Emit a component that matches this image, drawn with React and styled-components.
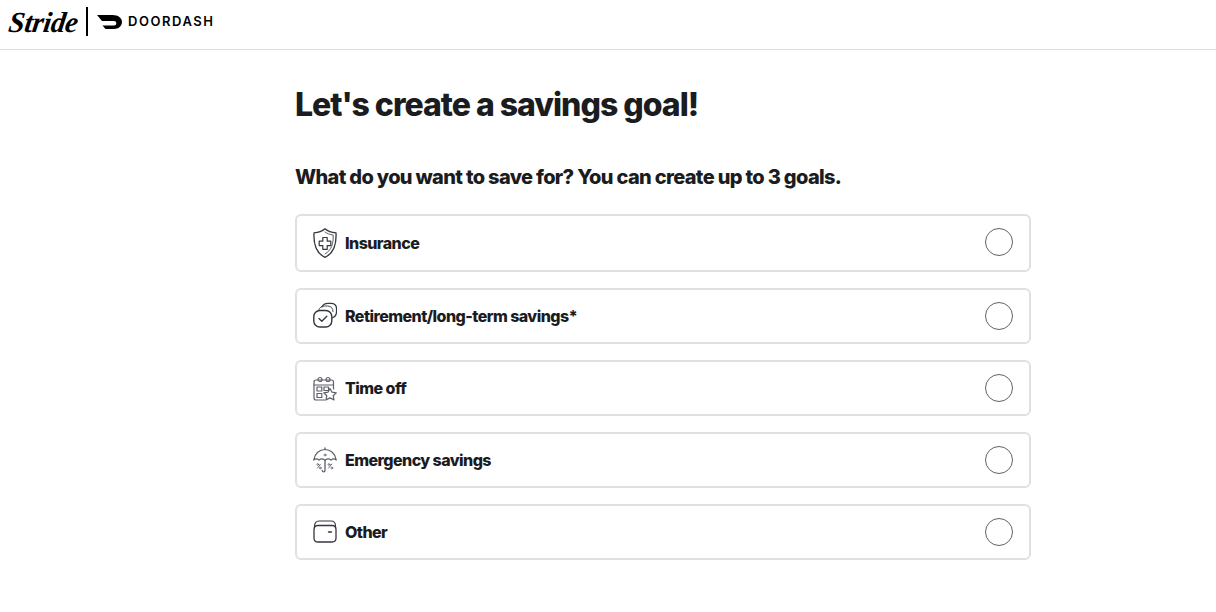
import React from "react";
import styled, { createGlobalStyle } from "styled-components";

const GlobalStyle = createGlobalStyle`
  body {
    margin: 0;
    background: #fff;
    color: #1b1c20;
    font-family: Inter, "Liberation Sans", sans-serif;
  }
`;

const Header = styled.header`
  height: 49px;
  border-bottom: 1px solid #dcdcdc;
  display: flex;
  align-items: flex-start;
  padding-left: 9px;
`;

const StrideMark = styled.span`
  font-family: "Liberation Serif", serif;
  font-style: italic;
  font-weight: 700;
  font-size: 29px;
  line-height: 30px;
  letter-spacing: -0.3px;
  margin-top: 7px;
  width: 69px;
  color: #000;
  transform: skewX(-8deg);
`;

const Divider = styled.div`
  width: 2px;
  height: 29px;
  margin: 7px 9px 0 8px;
  background: #000;
`;

const DashLogo = styled.svg`
  width: 25px;
  height: 14px;
  margin-top: 15px;
`;

const DashWord = styled.span`
  font-family: Inter, sans-serif;
  font-weight: 600;
  font-size: 13px;
  line-height: 14px;
  letter-spacing: 1.55px;
  margin: 14px 0 0 6px;
  color: #000;
`;

const Main = styled.main`
  width: 736px;
  margin-left: 295px;
`;

const Title = styled.h1`
  margin: 35px 0 0;
  font-size: 32px;
  line-height: 40px;
  font-weight: 800;
  letter-spacing: -1px;
`;

const Question = styled.h2`
  margin: 38px 0 0;
  font-size: 20px;
  line-height: 28px;
  font-weight: 800;
  letter-spacing: -0.67px;
`;

const GoalList = styled.div`
  margin-top: 23px;
  display: flex;
  flex-direction: column;
  gap: 16px;
`;

const GoalRow = styled.label`
  box-sizing: border-box;
  border: 2px solid #e0e0e4;
  border-radius: 6px;
  padding: 12px 16px;
  display: flex;
  align-items: center;
  cursor: pointer;
`;

const IconSlot = styled.svg`
  width: 24px;
  height: ${(p) => p.$tall ? 30 : 28}px;
  flex: none;
  fill: none;
  stroke: ${(p) => p.$soft ? "#5c6068" : "#33373f"};
  stroke-width: 1.2;
  stroke-linecap: round;
  stroke-linejoin: round;
`;

const GoalLabel = styled.span`
  margin-left: 8px;
  flex: 1;
  font-size: 16px;
  font-weight: 800;
  letter-spacing: -0.55px;
`;

const Radio = styled.span`
  width: 28px;
  height: 28px;
  box-sizing: border-box;
  border: 1px solid #5f6268;
  border-radius: 50%;
  flex: none;
  align-self: flex-start;
`;

const ShieldIcon = () => (
  <IconSlot $tall viewBox="0 0 24 30">
    <path d="M12 .8c2.800 2.400 6.500 3.700 11 4 .6 11-1.800 20.200-11 24.500C2.800 25 .4 15.800 1 4.800c4.500-.3 8.200-1.600 11-4z" strokeWidth="1.300" />
    <path d="M12 4c2.300 1.600 5 2.600 8.200 3 .3 8.500-1.700 15.500-8.200 19" strokeWidth="0.8" />
    <path d="M9.800 9.500h4.400v3.700h3.600v4.400h-3.600v3.700H9.800v-3.700H6.200v-4.400h3.600z" strokeWidth="1.200" />
  </IconSlot>
);

const ChecksIcon = () => (
  <IconSlot viewBox="0 0 24 28">
    <path d="M9 5C10 2.500 12 1.300 15 1.300h3c3.500 0 5.500 2 5.500 5.500v3c0 3-1.500 5-4 6" />
    <path d="M5.500 8.500C6.500 5.500 8.500 4 11.500 4h3c3.500 0 5.500 2 5.500 5.500" strokeWidth="0.9" />
    <rect x="0.800" y="8.500" width="18" height="16.500" rx="6" strokeWidth="1.400" />
    <path d="M6 16.500l2.800 2.700 5-5" strokeWidth="1.300" />
  </IconSlot>
);

const CalendarIcon = () => (
  <IconSlot $soft viewBox="0 0 24 28">
    <path d="M12 26H3c-1.300 0-2-.7-2-2V8c0-1.300.7-2 2-2h15.500c1.300 0 2 .7 2 2v7" />
    <path d="M1 11h19.500" />
    <circle cx="7" cy="5.500" r="2" />
    <circle cx="15" cy="5.500" r="2" />
    <path d="M4 13h4.800v4H4zM11 13h4.500v3.500H11zM4 19.500h4.800v4H4z" />
    <path d="M17 14.500l2 3.700 4.300.6-3.100 2.900.8 4.200-4-2-4 2 .8-4.200-3.100-2.900 4.300-.6z" />
  </IconSlot>
);

const UmbrellaIcon = () => (
  <IconSlot $soft viewBox="0 0 24 28">
    <path d="M.7 14C1.800 7.500 6.500 3.500 12 3.500S22.200 7.500 23.300 14c-1.700-1.300-3.800-1.300-5.300.2-1.500-1.500-4-1.500-6 0-2-1.500-4.500-1.500-6 0-1.500-1.500-3.600-1.500-5.300-.2z" />
    <path d="M12 2v1.500M12 14.500v10c0 1.800-2.800 1.800-2.800-.2" strokeWidth="1.300" />
    <path d="M4.500 22l2.800-3.500M15.500 22l3.500-4" strokeWidth="0.9" />
    <circle cx="4.800" cy="18.500" r=".9" strokeWidth="0.8" />
    <circle cx="7.300" cy="22" r=".9" strokeWidth="0.8" />
    <circle cx="16" cy="18.500" r=".9" strokeWidth="0.8" />
    <circle cx="18.800" cy="22" r=".9" strokeWidth="0.8" />
    <circle cx="12" cy="9" r="1" strokeWidth="0.8" />
  </IconSlot>
);

const WalletIcon = () => (
  <IconSlot viewBox="0 0 24 28">
    <path d="M1.500 10V8c0-3 1.800-5 4.500-5h12c2.700 0 4.500 2 4.500 5v2" strokeWidth="1.100" />
    <path d="M5 7.500h14c2.700 0 4 1.500 4 4v8.500c0 2.700-1.500 4-4 4H5c-2.700 0-4-1.300-4-4v-8.500c0-2.500 1.300-4 4-4z" strokeWidth="1.300" />
    <path d="M15.500 14h3" strokeWidth="1.400" />
  </IconSlot>
);

const goals = [
  { id: "insurance", label: "Insurance", Icon: ShieldIcon },
  { id: "retirement", label: "Retirement/long-term savings*", Icon: ChecksIcon },
  { id: "timeoff", label: "Time off", Icon: CalendarIcon },
  { id: "emergency", label: "Emergency savings", Icon: UmbrellaIcon },
  { id: "other", label: "Other", Icon: WalletIcon },
];

function App() {
  return (
    <>
      <GlobalStyle />
      <Header>
        <StrideMark>Stride</StrideMark>
        <Divider />
        <DashLogo viewBox="0 0 25 14">
          <path d="M0 0h15.500C21 0 25 2.800 25 7s-3.500 7-8 7H8.500L5.500 10.500h11.500c1.300 0 2.300-.8 2.300-2.200S18.300 6 17 6H5z" fill="#000" />
        </DashLogo>
        <DashWord>DOORDASH</DashWord>
      </Header>
      <Main>
        <Title>Let's create a savings goal!</Title>
        <Question>What do you want to save for? You can create up to 3 goals.</Question>
        <GoalList>
          {goals.map((goal) => (
            <GoalRow key={goal.id}>
              <goal.Icon />
              <GoalLabel>{goal.label}</GoalLabel>
              <Radio />
            </GoalRow>
          ))}
        </GoalList>
      </Main>
    </>
  );
}

export default App;
